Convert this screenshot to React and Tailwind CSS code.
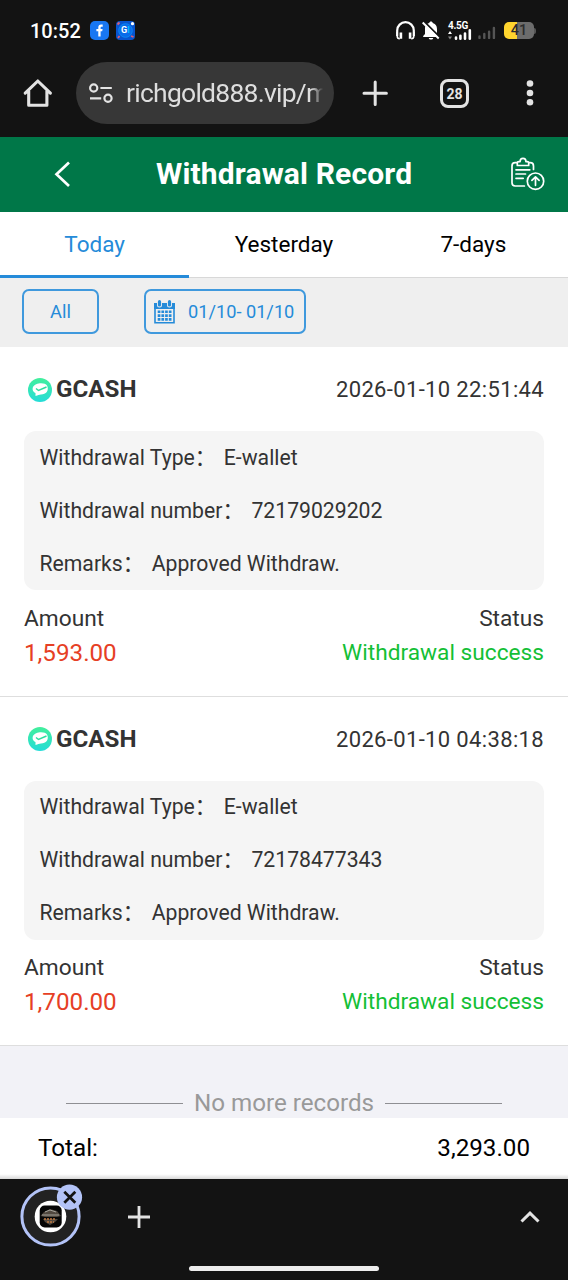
import React from "react";

const records = [
  { time: "2026-01-10 22:51:44", number: "72179029202", amount: "1,593.00" },
  { time: "2026-01-10 04:38:18", number: "72178477343", amount: "1,700.00" },
];

function StatusBar() {
  return (
    <div className="flex h-[61px] items-center pl-[30px] pr-[32px] text-white">
      <span className="w-[60px] whitespace-nowrap text-[20px] font-medium">10:52</span>
      <svg className="h-[19px] w-[19px]" viewBox="0 0 19 19">
        <rect width="19" height="19" rx="5" fill="#1877f2" />
        <path d="M8.3 15.5v-5.2H6.4V8h1.9V6.6c0-2.1 1-3.1 2.9-3.1h1.5v2.2h-1.1c-.8 0-1 .4-1 1.1V8h2l-.4 2.3h-1.6v5.2z" fill="#fff" />
      </svg>
      <div className="ml-[7px] grid h-[19px] w-[19px] place-items-center">
        <svg className="col-start-1 row-start-1 h-[19px] w-[19px]" viewBox="0 0 19 19">
          <rect width="19" height="19" rx="4" fill="#0754cf" />
          <circle cx="9.5" cy="9.5" r="6.8" fill="#096be9" stroke="#0b86f5" />
          <path d="M1.5 3.5l2-2M15 15l2.5 1M2 17l1.5-2" stroke="#dd5f73" strokeWidth="1.8" />
          <circle cx="16.5" cy="2.7" r="1.6" fill="#fff" />
        </svg>
        <span className="col-start-1 row-start-1 text-[9px] leading-none font-bold">G<span className="text-sky-400">I</span></span>
      </div>
      <div className="ml-auto flex items-center">
        <svg className="h-[19px] w-[19px]" viewBox="0 0 19 19" fill="none">
          <path d="M1.2 15V9.5a8.3 8.3 0 0 1 16.6 0V15" stroke="#fff" strokeWidth="2.2" />
          <path d="M1.2 11v4q0 2.8 2.6 2.8M17.8 11v4q0 2.8-2.6 2.8" stroke="#fff" strokeWidth="1.6" />
          <path d="M4.9 11.5v6.3M14.1 11.5v6.3" stroke="#fff" strokeWidth="2.6" />
        </svg>
        <svg className="ml-[7px] h-[19px] w-[18px]" viewBox="0 0 18 19">
          <path d="M3 6.5C3.7 4 5 2.7 7.3 2.1c0-2 3.4-2 3.4 0C14 3 15 5.5 15 8.5V13l1.8 2v1H1.2v-1L3 13zM6.8 17h4.4c0 2-4.4 2-4.4 0z" fill="#fff" />
          <path d="M1.5 0l17 17" stroke="#131313" strokeWidth="2" />
          <path d="M.7 1.5l16 16" stroke="#fff" strokeWidth="1.9" />
        </svg>
        <div className="ml-[8px] flex w-[25px] flex-col">
          <span className="h-[8px] whitespace-nowrap text-[10px] leading-[8px] font-bold tracking-[-0.3px]">4.5G</span>
          <svg className="-mt-[1px] h-[11px] w-[25px]" viewBox="0 0 25 11">
            <path d="M0 5l2-3 2 3z" fill="#fff" />
            <path d="M0 7.5h4l-2 3z" fill="#888" />
            <path d="M8 9.7V8.5M12.4 9.7V6.7M17 9.7V4.6M21.8 9.7V1.3" stroke="#fff" strokeWidth="2.6" strokeLinecap="round" />
          </svg>
        </div>
        <svg className="mt-[5px] ml-[5px] h-[14px] w-[18px]" viewBox="0 0 18 14">
          <path d="M1.5 11.9v-1.5M6.3 11.9V8M11.1 11.9V5.8M15.9 11.9V2" stroke="#555" strokeWidth="2.4" strokeLinecap="round" />
        </svg>
        <div className="ml-[8px] flex items-center">
          <div className="flex h-[17px] w-[30px] items-center justify-center rounded-[5px] bg-linear-to-r from-[#ffd52e] from-[42%] to-[#6c6c6c] to-[42%] pt-px text-[14.5px] leading-none font-medium text-[#2c2c2c]">
            41
          </div>
          <div className="h-[6px] w-[2px] rounded-r bg-[#555]" />
        </div>
      </div>
    </div>
  );
}

function AddressBar() {
  return (
    <div className="flex h-[75px] items-start pt-px">
      <svg className="mt-[16px] ml-[23px] h-[30px] w-[30px]" viewBox="0 0 30 30" fill="none" stroke="#e3e3e3" strokeWidth="3.1" strokeLinecap="round" strokeLinejoin="round">
        <path d="M2.2 15.2L14.8 3l12.6 12.2M5.7 13v14.3h18.2V13" />
      </svg>
      <div className="ml-[23px] flex h-[62px] w-[258px] items-center rounded-full bg-[#373737]">
        <svg className="ml-[12px] h-[22px] w-[26px]" viewBox="0 0 26 22" fill="none" stroke="#e3e3e3" strokeWidth="2.2">
          <circle cx="5.7" cy="6" r="3.6" />
          <circle cx="20" cy="16.3" r="3.6" />
          <path d="M12.4 6h11.4M2 16.3h11.2" />
        </svg>
        <div className="ml-[12px] w-[197px] overflow-hidden mask-r-from-94% text-[26.5px] leading-[40px] tracking-[-0.75px] whitespace-nowrap text-[#dedede]">richgold888.vip/m</div>
      </div>
      <svg className="mt-[18px] ml-[28px] h-[26px] w-[26px]" viewBox="0 0 26 26" stroke="#e3e3e3" strokeWidth="3" strokeLinecap="round">
        <path d="M13.2 2v22.4M2 13.2h22.4" />
      </svg>
      <div className="mt-[17px] ml-[52px] flex h-[29px] w-[29px] items-center justify-center rounded-[8px] border-[3px] border-[#e3e3e3] text-[14px] leading-none font-bold text-[#e3e3e3]">28</div>
      <svg className="mt-[17px] ml-[56px] h-[28px] w-[10px]" viewBox="0 0 10 28" fill="#e3e3e3">
        <circle cx="5" cy="4.5" r="3.3" />
        <circle cx="5" cy="14" r="3.3" />
        <circle cx="5" cy="23.2" r="3.3" />
      </svg>
    </div>
  );
}

function Header() {
  return (
    <header className="flex h-[75px] items-center bg-[#007748] pb-[2px]">
      <svg className="ml-[54px] h-[26px] w-[17px]" viewBox="0 0 17 26" fill="none" stroke="#fff" strokeWidth="2.7">
        <path d="M15 1.5L2.5 13.3 15 25" />
      </svg>
      <h1 className="ml-[71px] w-[286px] pl-[14px] text-[30px] leading-[40px] font-bold tracking-[0.15px] whitespace-nowrap text-white">Withdrawal Record</h1>
      <svg className="ml-[82px] h-[34px] w-[35px]" viewBox="0 0 35 34" fill="none" stroke="#fff" strokeWidth="1.7" strokeLinecap="round" strokeLinejoin="round">
        <path d="M7.3 5.7H5.2Q2 5.7 2 9v16.8Q2 29 5.2 29h9.2M18.7 5.7h1.5q3.3 0 3.3 3.3v3.5" />
        <path d="M7.3 8.5V5.8q0-1.2 1.6-1.2h1.2c0-4.4 5.8-4.4 5.8 0h1.2q1.6 0 1.6 1.2v2.7zM6 12.8h13.8M6 17h9.5M6 21.3h7.2" />
        <circle cx="25.5" cy="24.2" r="8.2" />
        <path d="M25.5 28.3v-8M21.9 23.4l3.6-3.6 3.6 3.6" />
      </svg>
    </header>
  );
}

function Filters() {
  return (
    <div className="flex h-[69px] items-start bg-[#efefef] pt-[11px] text-[#258bd9]">
      <button className="ml-[22px] h-[45px] w-[77px] rounded-[7px] border-2 border-[#3f99dd] pt-[2px] text-[18.3px] leading-none">All</button>
      <button className="ml-[45px] flex h-[45px] w-[162px] items-center rounded-[7px] border-2 border-[#3f99dd] pl-[8px] text-[18.2px]">
        <svg className="h-[24px] w-[21px] shrink-0" viewBox="0 0 21 24" fill="none">
          <path d="M1 8V22.7h19V8" stroke="#258bd9" strokeWidth="1.6" />
          <path d="M0 3h21v6H0z" fill="#258bd9" />
          <path d="M5.5 1v4M15.5 1v4" stroke="#efefef" strokeWidth="5" strokeLinecap="round" />
          <path d="M5.5 1.7v3.2M15.5 1.7v3.2" stroke="#258bd9" strokeWidth="3.2" strokeLinecap="round" />
          <path d="M3.7 11.8h14M3.7 15.6h14M3.7 19.4h14" stroke="#258bd9" strokeWidth="2.6" strokeDasharray="2.7 1" />
        </svg>
        <span className="ml-[13px] whitespace-nowrap">01/10- 01/10</span>
      </button>
    </div>
  );
}

function Field({ label, value }) {
  return (
    <div className="flex h-[53px] items-center whitespace-nowrap">
      <span>{label}</span>
      <span className="w-[21.5px] pb-[4px] font-['Noto_Sans_CJK_SC']">：</span>
      <span className="ml-[7.5px]">{value}</span>
    </div>
  );
}

function Record({ record }) {
  return (
    <article className="h-[349.5px] border-b border-[#dedede] bg-white px-[24px] text-[21.2px] text-[#333]">
      <div className="flex h-[84px] items-center pt-px pl-[4px]">
        <svg className="h-[24px] w-[24px]" viewBox="0 0 24 24">
          <defs>
            <linearGradient id="wallet" x1="0" y1="0" x2="0" y2="1">
              <stop stopColor="#42ef9c" />
              <stop offset="1" stopColor="#24dcd8" />
            </linearGradient>
          </defs>
          <circle cx="12" cy="12" r="12" fill="url(#wallet)" />
          <path d="M5 9c2-4.500 12-5 14-1.500 2.500 5-1 9-6 9-2 0-3 1-5.500 1.500V15C4.500 13.800 4.200 11 5 9z" fill="#fff" />
          <path d="M8 10.5l2.500 2L18.500 9" fill="none" stroke="#2dde9f" strokeWidth="1.5" />
        </svg>
        <span className="ml-[4px] text-[24.2px] font-bold">GCASH</span>
        <time className="ml-auto text-[22px] tracking-[0.35px]">{record.time}</time>
      </div>
      <div className="h-[159px] rounded-[12px] bg-[#f5f5f5] pl-[15.5px]">
        <Field label="Withdrawal Type" value="E-wallet" />
        <Field label="Withdrawal number" value={record.number} />
        <Field label="Remarks" value="Approved Withdraw." />
      </div>
      <div className="mt-[12px] flex h-[34px] items-center justify-between text-[22.7px]">
        <span>Amount</span>
        <span>Status</span>
      </div>
      <div className="flex h-[34px] items-center justify-between text-[22.7px]">
        <span className="text-[24.2px] text-[#e63f25]">{record.amount}</span>
        <span className="text-[#14bf36]">Withdrawal success</span>
      </div>
    </article>
  );
}

function BottomBar() {
  return (
    <footer className="h-[101px] bg-[#131313]">
      <div className="flex h-[76px] items-center">
        <svg className="mb-[3px] ml-[20px] h-[63px] w-[63px]" viewBox="0 0 63 63" fill="none">
          <circle cx="30.5" cy="32.5" r="28.6" fill="#222" stroke="#b3c3f7" strokeWidth="3" />
          <circle cx="30.5" cy="32.5" r="15.8" fill="#fff" />
          <rect x="19.7" y="21.5" width="22" height="22" rx="5" fill="#060606" />
          <path d="M20.5 32l3.500-4 6-3 7 2 4 5-4 1H25zM23 35h15l-3 3-5 3-5-3z" fill="#51483f" />
          <path d="M25 28l5-2 6 2M22 31h17" stroke="#a5a29a" />
          <path d="M24 35h12M27 38h7" stroke="#c07942" strokeWidth="1.5" strokeDasharray="2 1" />
          <circle cx="49.5" cy="13.2" r="12.6" fill="#b3c3f7" />
          <path d="M44.3 7.7l11 11M55.3 7.7l-11 11" stroke="#131313" strokeWidth="2.7" />
        </svg>
        <svg className="ml-[45px] h-[22px] w-[22px]" viewBox="0 0 22 22" stroke="#e3e3e3" strokeWidth="2.8">
          <path d="M11 0v22M0 11h22" />
        </svg>
        <svg className="mr-[28px] ml-auto h-[12px] w-[20px]" viewBox="0 0 20 12" fill="none" stroke="#e3e3e3" strokeWidth="3">
          <path d="M1.5 10.5L10 2.2l8.5 8.3" />
        </svg>
      </div>
      <div className="mx-auto mt-[11px] h-[5px] w-[190px] rounded-full bg-[#ededed]" />
    </footer>
  );
}

export default function App() {
  return (
    <div className="h-[1280px] w-[568px] overflow-hidden bg-white font-[Roboto,sans-serif]">
      <div className="h-[137px] bg-[#131313]">
        <StatusBar />
        <AddressBar />
      </div>
      <Header />
      <nav className="grid h-[66px] grid-cols-3 text-center text-[22.5px] leading-[65px] text-black">
        <div className="h-[66px] text-[#258bd9] shadow-[inset_0_-3px_0_#258bd9]">Today</div>
        <div className="h-[66px] shadow-[inset_0_-1px_0_#d8d8d8]">Yesterday</div>
        <div className="h-[66px] shadow-[inset_0_-1px_0_#d8d8d8]">7-days</div>
      </nav>
      <Filters />
      {records.map((record) => (
        <Record key={record.number} record={record} />
      ))}
      <div className="flex h-[72px] items-end justify-center bg-[#f2f2f7] text-[24.2px] leading-[30px] text-[#999]">
        <div className="mb-[14px] h-[1.5px] w-[117px] bg-[#8f8f93]" />
        <span className="mx-[11px] whitespace-nowrap">No more records</span>
        <div className="mb-[14px] h-[1.5px] w-[117px] bg-[#8f8f93]" />
      </div>
      <div className="flex h-[61px] items-center justify-between bg-linear-to-b from-white from-92% to-[#d8d8d8] px-[38px] text-[24.2px] text-black">
        <span>Total:</span>
        <span>3,293.00</span>
      </div>
      <BottomBar />
    </div>
  );
}
